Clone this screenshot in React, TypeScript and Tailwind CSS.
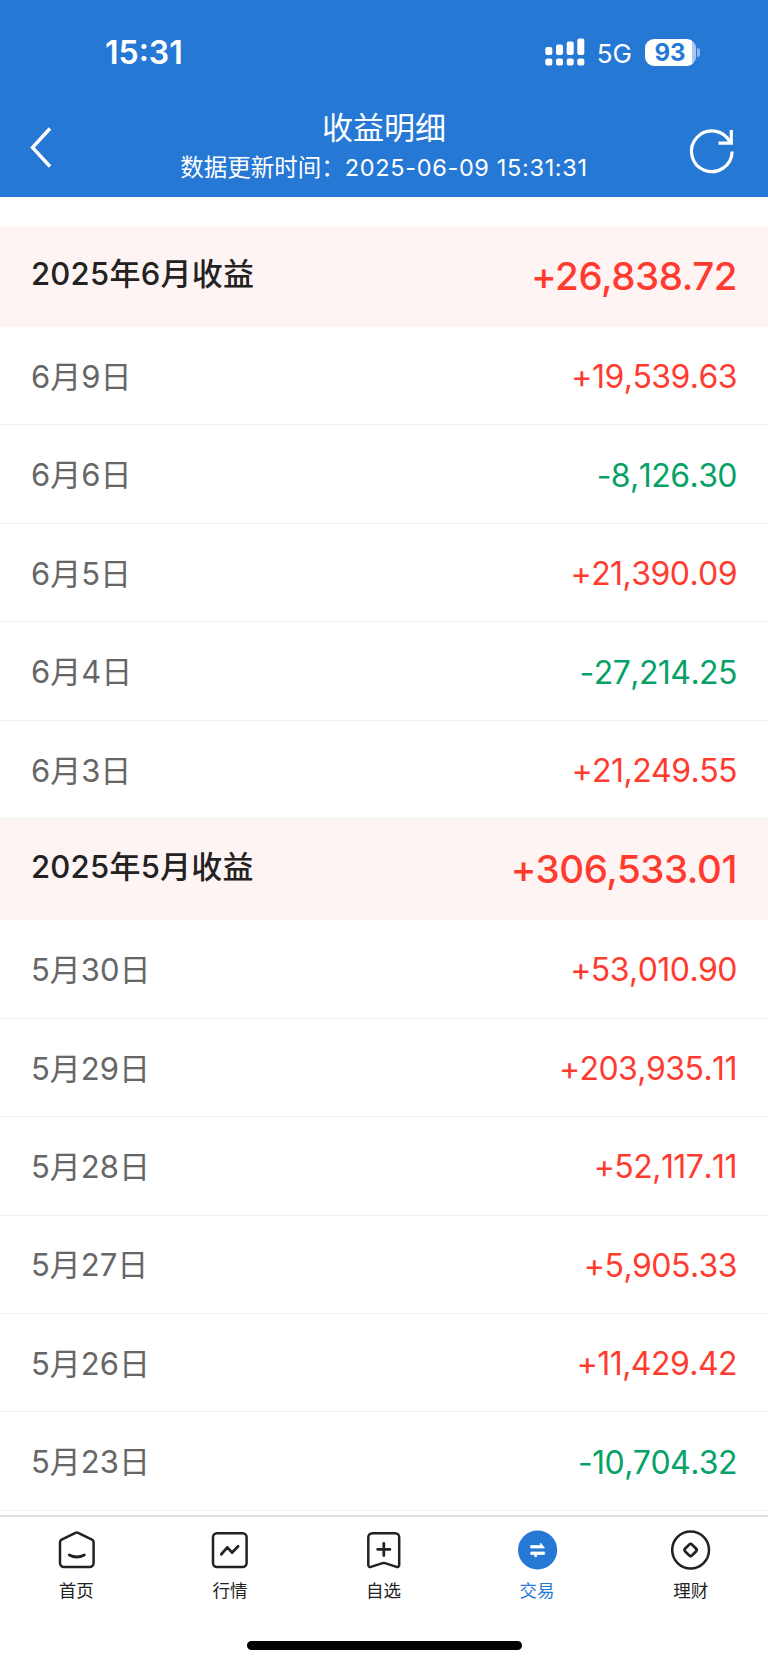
import type { ReactNode } from "react";

type Entry = { date: string; amount: string };

const months: { title: string; total: string; entries: Entry[] }[] = [
  {
    title: "2025年6月收益",
    total: "+26,838.72",
    entries: [
      { date: "6月9日", amount: "+19,539.63" },
      { date: "6月6日", amount: "-8,126.30" },
      { date: "6月5日", amount: "+21,390.09" },
      { date: "6月4日", amount: "-27,214.25" },
      { date: "6月3日", amount: "+21,249.55" },
    ],
  },
  {
    title: "2025年5月收益",
    total: "+306,533.01",
    entries: [
      { date: "5月30日", amount: "+53,010.90" },
      { date: "5月29日", amount: "+203,935.11" },
      { date: "5月28日", amount: "+52,117.11" },
      { date: "5月27日", amount: "+5,905.33" },
      { date: "5月26日", amount: "+11,429.42" },
      { date: "5月23日", amount: "-10,704.32" },
    ],
  },
];

function TabIcon({ children }: { children: ReactNode }) {
  return (
    <svg
      width="40"
      height="40"
      viewBox="0 0 40 40"
      fill="none"
      stroke="currentColor"
      strokeWidth="2.5"
      strokeLinecap="round"
      strokeLinejoin="round"
    >
      {children}
    </svg>
  );
}

const tabs = [
  {
    label: "首页",
    icon: (
      <TabIcon>
        <path d="M18.5 2.8a3 3 0 0 1 2.6 0L35 9.7a3 3 0 0 1 1.6 2.7V33a4 4 0 0 1-4 4H7a4 4 0 0 1-4-4V12.4a3 3 0 0 1 1.6-2.7Z" />
        <path d="M12.3 25q7.5 4 15 0" strokeWidth="2.8" />
      </TabIcon>
    ),
  },
  {
    label: "行情",
    icon: (
      <TabIcon>
        <rect x="3" y="3.3" width="33.6" height="33.7" rx="4" />
        <path d="m11.3 24.2 6-6.8 4.8 5.2 6-6.3" strokeWidth="2.8" />
      </TabIcon>
    ),
  },
  {
    label: "自选",
    icon: (
      <TabIcon>
        <path d="M8.3 3.3h22.9a4 4 0 0 1 4 4V35a2 2 0 0 1-2.7 1.9L21 33.1a4 4 0 0 0-2.5 0L7 36.900A2 2 0 0 1 4.300 35V7.300a4 4 0 0 1 4-4Z" />
        <path d="M19.8 13.3v12.2M13.7 19.4h12.2" strokeWidth="2.8" />
      </TabIcon>
    ),
  },
  {
    label: "交易",
    active: true,
    icon: (
      <TabIcon>
        <circle cx="19.6" cy="20" r="19.6" fill="currentColor" stroke="none" />
        <path
          d="M13 15.600h9.500v-2.600l4 5H13ZM26.300 22h-13.500v2.400h4v2.300h1.800v-2.300h7.700Z"
          fill="white"
          stroke="white"
          strokeWidth="0.8"
        />
      </TabIcon>
    ),
  },
  {
    label: "理财",
    icon: (
      <TabIcon>
        <circle cx="19.6" cy="20" r="18.4" />
        <rect x="14.8" y="15.2" width="9.6" height="9.6" rx="2" transform="rotate(45 19.6 20)" strokeWidth="2.8" />
      </TabIcon>
    ),
  },
];

function StatusBar() {
  return (
    <div className="flex h-[104px] items-center justify-between pr-[68px] pl-[105px]">
      <span className="pt-[2px] text-[32px] leading-none font-semibold">15:31</span>
      <div className="flex items-center">
        <svg width="40" height="28" viewBox="0 0 40 28" fill="currentColor">
          <rect x="0.3" y="9" width="7" height="8" rx="2" />
          <rect x="11" y="6.5" width="7" height="10.5" rx="2" />
          <rect x="21.7" y="3.5" width="7" height="13.5" rx="2" />
          <rect x="32.3" y="0.5" width="7" height="16.5" rx="2" />
          <rect x="0.3" y="20.5" width="7" height="7" rx="2" />
          <rect x="11" y="20.5" width="7" height="7" rx="2" />
          <rect x="21.7" y="20.5" width="7" height="7" rx="2" />
          <rect x="32.3" y="20.5" width="7" height="7" rx="2" />
        </svg>
        <span className="ml-[12px] pt-[3px] text-[26px] leading-none">5G</span>
        <div className="ml-[13px] flex h-[27px] w-[51px] items-center justify-center rounded-[9px] bg-linear-to-r from-white from-92% to-[#a8c9ef] to-92% pt-px pr-px text-[24px] leading-none font-bold text-[#2678d5]">
          93
        </div>
        <div className="ml-[1px] h-[9px] w-[3px] rounded-r-full bg-[#8fb9ea]" />
      </div>
    </div>
  );
}

function NavBar() {
  return (
    <div className="flex h-[92.5px] items-start justify-between pr-[34px] pl-[28px]">
      <svg className="mt-[22px]" width="50" height="44" viewBox="0 0 50 44" fill="none" stroke="currentColor" strokeWidth="3.4">
        <path d="M22 2.5 4.5 21.5 22 40.5" />
      </svg>
      <div className="flex flex-col items-center">
        <h1 className="mt-[7px] text-[31px] leading-[34px]">收益明细</h1>
        <p className="mt-[6px] text-[23.5px] leading-[34px] whitespace-nowrap">
          数据更新时间：<span className="tracking-[0.66px]">2025-06-09 15:31:31</span>
        </p>
      </div>
      <svg
        className="mt-[25px] overflow-visible"
        width="44"
        height="44"
        viewBox="0 0 44 44"
        fill="none"
        stroke="currentColor"
        strokeWidth="3.2"
      >
        <path d="M42.1 22.500A20.300 20.300 0 1 1 40 13.300" />
        <path d="M41.3 1v13.100H28.500" />
      </svg>
    </div>
  );
}

function Row({ date, amount }: Entry) {
  return (
    <li className="flex h-[98.45px] items-center justify-between border-b border-[#eeeff0] px-[31px] pt-[3px]">
      <span className="text-[31px] text-[#666]">{date}</span>
      <span
        className={`text-[32px] tracking-[-0.55px] [font-kerning:none] ${
          amount.startsWith("+") ? "text-[#ff3b30]" : "text-[#07a168]"
        }`}
      >
        {amount}
      </span>
    </li>
  );
}

export default function App() {
  return (
    <div className="flex h-[1665px] w-[768px] flex-col overflow-hidden bg-white font-['Inter','Noto_Sans_CJK_SC',sans-serif]">
      <header className="shrink-0 bg-[#2678d5] text-white">
        <StatusBar />
        <NavBar />
      </header>

      <main className="min-h-0 flex-1 overflow-hidden pt-[29.5px]">
        {months.map((month) => (
          <section key={month.title}>
            <div className="flex h-[101px] items-center justify-between bg-[#fff4f4] px-[31px]">
              <h2 className="pb-[5px] text-[31px] font-medium tracking-[0.25px] text-[#222]">{month.title}</h2>
              <span className="text-[38.5px] font-[450] tracking-[-0.45px] text-[#ff3b30]">{month.total}</span>
            </div>
            <ul>
              {month.entries.map((entry) => (
                <Row key={entry.date} {...entry} />
              ))}
            </ul>
          </section>
        ))}
      </main>

      <nav className="flex h-[150px] shrink-0 flex-col items-center border-t-2 border-[#dedede]">
        <div className="grid w-full grid-cols-5 pt-[13px]">
          {tabs.map((tab) => (
            <a key={tab.label} className={`flex flex-col items-center ${tab.active ? "text-[#2678d5]" : "text-[#222]"}`}>
              {tab.icon}
              <span className="mt-[9px] pr-px text-[17.5px] leading-6">{tab.label}</span>
            </a>
          ))}
        </div>
        <div className="mt-[38px] h-[9px] w-[275px] rounded-full bg-black" />
      </nav>
    </div>
  );
}
